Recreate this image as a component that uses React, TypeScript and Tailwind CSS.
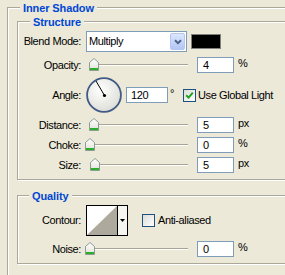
import React from "react";

const BASE =
  "font-['Liberation_Sans',Arial,sans-serif] text-[11px] leading-[13px] tracking-[-0.4px] text-black";

function Thumb() {
  return (
    <svg width="10" height="13" viewBox="0 0 10 13">
      <defs>
        <linearGradient id="tg" x1="0" y1="0" x2="0" y2="1">
          <stop offset="0" stopColor="#ffffff" />
          <stop offset="1" stopColor="#E2E2DA" />
        </linearGradient>
      </defs>
      <path d="M0.5 12.5V4.5L5 0.5L9.5 4.5V12.5Z" fill="url(#tg)" stroke="#8C9C93" />
      <rect x="1" y="10" width="8" height="2" fill="#2BAE2B" />
    </svg>
  );
}

function Slider({ pos }: { pos: string }) {
  return (
    <div className="relative w-[103px] h-[16px] shrink-0">
      <div className="absolute left-[5px] right-0 top-[7px] h-[2px] border-t border-[#A8A595] bg-white" />
      <div className={`absolute top-[1px] ${pos}`}>
        <Thumb />
      </div>
    </div>
  );
}

function Field({ v, w = "w-[37px]", pl = "pl-[5px]" }: { v: string; w?: string; pl?: string }) {
  return (
    <div className={`${w} ${pl} h-[16px] shrink-0 border border-[#7F9DB9] bg-white leading-[14px]`}>
      {v}
    </div>
  );
}

function Label({ children }: { children: React.ReactNode }) {
  return <div className="w-[63px] shrink-0 text-right">{children}</div>;
}

function SliderRow({
  label,
  value,
  unit,
  pos,
  mt,
}: {
  label: string;
  value: string;
  unit: string;
  pos: string;
  mt: string;
}) {
  return (
    <div className={`flex items-center h-[16px] ${mt}`}>
      <Label>{label}</Label>
      <div className="ml-[4px]">
        <Slider pos={pos} />
      </div>
      <div className="ml-[9px]">
        <Field v={value} />
      </div>
      <div className="ml-[4px] self-start">{unit}</div>
    </div>
  );
}

function Check({ checked }: { checked?: boolean }) {
  return (
    <div className="w-[13px] h-[13px] shrink-0 border border-[#1C5180] bg-gradient-to-br from-[#DCDCD7] to-white flex items-center justify-center">
      {checked && (
        <svg width="9" height="9" viewBox="0 0 9 9">
          <path d="M1.2 4.2 L3.6 6.6 L7.8 1.6" stroke="#21A121" strokeWidth="2" fill="none" />
        </svg>
      )}
    </div>
  );
}

function Group({
  title,
  titleLeft,
  className,
  children,
}: {
  title: string;
  titleLeft: string;
  className: string;
  children: React.ReactNode;
}) {
  return (
    <div
      className={`relative border border-[#ACA899] shadow-[inset_1px_1px_0_#fff,1px_1px_0_#fff] ${className}`}
    >
      <span
        className={`absolute top-[-6px] ${titleLeft} px-[3px] bg-[#ECE9D8] font-bold tracking-[-0.1px] text-[#0046D5] whitespace-nowrap`}
      >
        {title}
      </span>
      {children}
    </div>
  );
}

export default function App() {
  return (
    <div className={`w-[285px] h-[275px] overflow-hidden bg-[#ECE9D8] pt-[7px] pl-[7px] ${BASE}`}>
      <Group title="Inner Shadow" titleLeft="left-[12px]" className="w-[300px] h-[300px] pt-[13px] pl-[9px]">
        <Group title="Structure" titleLeft="left-[12px]" className="pt-[9px] pb-[6px]">
          {/* Blend mode */}
          <div className="flex items-center h-[21px]">
            <Label>Blend Mode:</Label>
            <div className="ml-[5px] flex w-[101px] h-[21px] shrink-0 border border-[#7F9DB9] bg-white p-[1px]">
              <div className="flex-1 pl-[1px] leading-[17px]">Multiply</div>
              <div className="w-[15px] h-full rounded-[2px] border border-[#B4C6F2] bg-gradient-to-b from-[#DCE6FD] to-[#B2C6F4] flex items-center justify-center">
                <svg width="8" height="6" viewBox="0 0 8 6">
                  <path d="M1 1.2 L4 4.2 L7 1.2" stroke="#4D6185" strokeWidth="2" fill="none" />
                </svg>
              </div>
            </div>
            <div className="ml-[4px] w-[30px] h-[15px] bg-black border border-[#808080]" />
          </div>

          <SliderRow label="Opacity:" value="4" unit="%" pos="left-[4px]" mt="mt-[5px]" />

          {/* Angle */}
          <div className="flex items-center h-[36px] mt-[4px]">
            <Label>Angle:</Label>
            <div className="ml-[5px] shrink-0">
              <svg width="36" height="36" viewBox="0 0 36 36">
                <defs>
                  <radialGradient id="dg" cx="0.4" cy="0.35" r="0.7">
                    <stop offset="0" stopColor="#ffffff" />
                    <stop offset="1" stopColor="#DCDCD6" />
                  </radialGradient>
                </defs>
                <circle cx="18" cy="18" r="16.9" fill="url(#dg)" stroke="#415A86" strokeWidth="1.8" />
                <line x1="18.5" y1="18.5" x2="10" y2="4" stroke="#000" strokeWidth="1" />
                <circle cx="18.5" cy="18.5" r="1.6" fill="#000" />
              </svg>
            </div>
            <div className="ml-[4px]">
              <Field v="120" w="w-[42px]" pl="pl-[4px]" />
            </div>
            <div className="ml-[2px] self-start mt-[10px]">°</div>
            <div className="ml-[9px]">
              <Check checked />
            </div>
            <div className="ml-[2px]">Use Global Light</div>
          </div>

          <SliderRow label="Distance:" value="5" unit="px" pos="left-[4px]" mt="mt-[4px]" />
          <SliderRow label="Choke:" value="0" unit="%" pos="left-[0px]" mt="mt-[4px]" />
          <SliderRow label="Size:" value="5" unit="px" pos="left-[5px]" mt="mt-[4px]" />
        </Group>

        <Group title="Quality" titleLeft="left-[11px]" className="mt-[15px] pt-[9px] pb-[6px]">
          <div className="flex items-center h-[31px]">
            <Label>Contour:</Label>
            <div className="ml-[5px] flex w-[42px] h-[31px] shrink-0 border border-black">
              <svg width="30" height="29" viewBox="0 0 30 29">
                <rect width="30" height="29" fill="#fff" />
                <polygon points="0,29 30,0 30,29" fill="#ADA99C" />
              </svg>
              <div className="w-[10px] border-l border-black bg-[#F6F5F0] flex items-center justify-center">
                <svg width="5" height="3" viewBox="0 0 5 3">
                  <polygon points="0,0 5,0 2.5,3" fill="#000" />
                </svg>
              </div>
            </div>
            <div className="ml-[14px]">
              <Check />
            </div>
            <div className="ml-[3px]">Anti-aliased</div>
          </div>
          <SliderRow label="Noise:" value="0" unit="%" pos="left-[0px]" mt="mt-[5px]" />
        </Group>
      </Group>
    </div>
  );
}
